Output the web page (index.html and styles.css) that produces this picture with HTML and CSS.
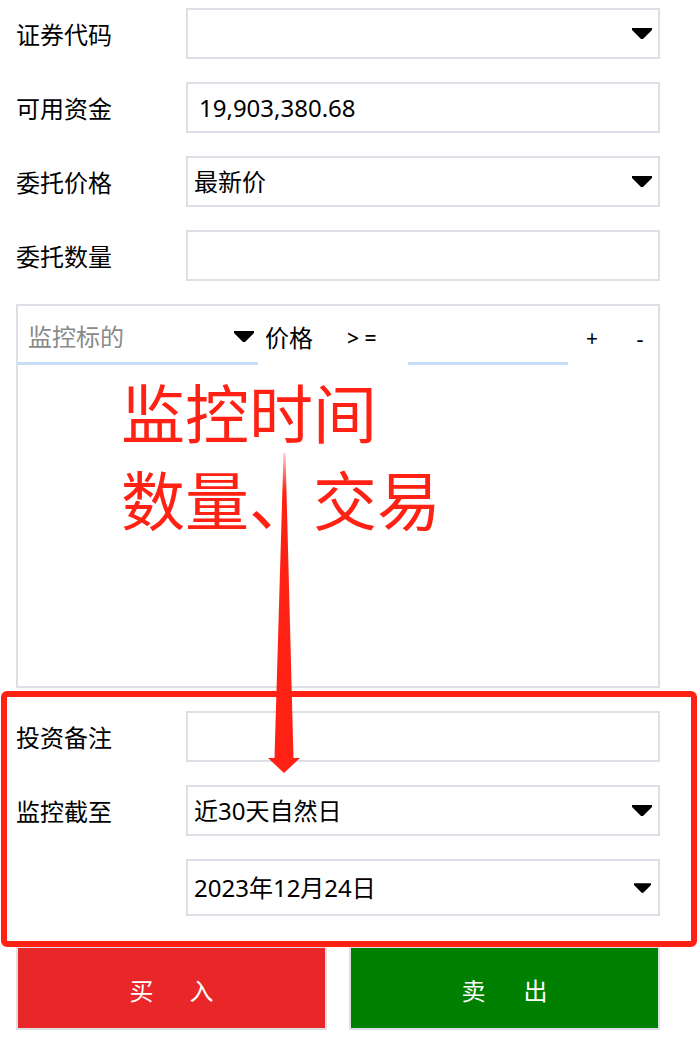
FILE: index.html
```html
<!DOCTYPE html>
<html lang="zh-CN">
<head>
<meta charset="utf-8">
<title>委托</title>
<link rel="stylesheet" href="styles.css">
</head>
<body>
<div class="page">
  <div class="form-row">
    <span class="label">证券代码</span>
    <div class="field select">
      <span class="val"></span>
      <svg class="caret" viewBox="0 0 20 11" width="20" height="11"><polygon points="0,0 20,0 20,2 11,11 9,11 0,2"/></svg>
    </div>
  </div>
  <div class="form-row">
    <span class="label">可用资金</span>
    <div class="field input"><span class="val">19,903,380.68</span></div>
  </div>
  <div class="form-row">
    <span class="label">委托价格</span>
    <div class="field select">
      <span class="val">最新价</span>
      <svg class="caret" viewBox="0 0 20 11" width="20" height="11"><polygon points="0,0 20,0 20,2 11,11 9,11 0,2"/></svg>
    </div>
  </div>
  <div class="form-row">
    <span class="label">委托数量</span>
    <div class="field input"><span class="val"></span></div>
  </div>

  <div class="monitor">
    <div class="cond">
      <div class="combo">
        <span class="placeholder">监控标的</span>
        <svg class="caret" viewBox="0 0 20 11" width="20" height="11"><polygon points="0,0 20,0 20,2 11,11 9,11 0,2"/></svg>
      </div>
      <span class="cond-label">价格</span>
      <span class="op">&gt; =</span>
      <div class="cond-input"></div>
      <span class="mini plus">+</span>
      <span class="mini minus">-</span>
    </div>
  </div>

  <div class="form-row">
    <span class="label">投资备注</span>
    <div class="field input"><span class="val"></span></div>
  </div>
  <div class="form-row">
    <span class="label">监控截至</span>
    <div class="field select">
      <span class="val">近30天自然日</span>
      <svg class="caret" viewBox="0 0 20 11" width="20" height="11"><polygon points="0,0 20,0 20,2 11,11 9,11 0,2"/></svg>
    </div>
  </div>
  <div class="form-row tall">
    <span class="label"></span>
    <div class="field select">
      <span class="val">2023年12月24日</span>
      <svg class="caret small" viewBox="0 0 20 11" width="17" height="10"><polygon points="0,0 20,0 20,2 11,11 9,11 0,2"/></svg>
    </div>
  </div>

  <div class="actions">
    <div class="btn buy"><span>买</span><span>入</span></div>
    <div class="btn sell"><span>卖</span><span>出</span></div>
  </div>
</div>

<div class="note">监控时间<br>数量、交易</div>
<svg class="arrow" viewBox="0 0 50 330" width="50" height="330">
  <defs>
    <linearGradient id="fade" x1="0" y1="0" x2="0" y2="1">
      <stop offset="0" stop-color="#ff2214" stop-opacity="0.25"/>
      <stop offset="0.12" stop-color="#ff2214" stop-opacity="1"/>
      <stop offset="1" stop-color="#ff2214" stop-opacity="1"/>
    </linearGradient>
  </defs>
  <polygon fill="url(#fade)" points="23.5,3 25.5,3 33.5,308 40,308 24,323 8,308 14.5,308"/>
</svg>
<div class="highlight"></div>
</body>
</html>
```
FILE: styles.css
```css
* { box-sizing: border-box; }

html, body {
  margin: 0;
  padding: 0;
  background: #ffffff;
}

body {
  font-family: "Noto Sans", "Noto Sans CJK SC", sans-serif;
  font-size: 24px;
  color: #000;
  position: relative;
  width: 699px;
  height: 1055px;
  overflow: hidden;
}

.page {
  padding: 8px 39px 0 16px;
  width: 699px;
}

.form-row {
  display: grid;
  grid-template-columns: 170px 1fr;
  align-items: center;
  height: 51px;
  margin-bottom: 23px;
}

.form-row.tall {
  height: 57px;
  margin-bottom: 30px;
}

.label {
  font-size: 24px;
  line-height: 30px;
  padding-top: 3px;
  white-space: nowrap;
}

.field {
  height: 100%;
  border: 2px solid #dcdfe6;
  background: #fff;
  display: flex;
  align-items: center;
  justify-content: space-between;
  padding: 0 6px 0 6px;
}

.field.input {
  padding-left: 11px;
}

.field .val {
  font-size: 24px;
  line-height: 30px;
  white-space: nowrap;
}

.caret {
  display: block;
  fill: #000;
  flex: none;
}

.caret.small {
  margin-right: 1px;
}

.monitor {
  height: 384px;
  border: 2px solid #dcdfe6;
  margin-bottom: 23px;
}

.cond {
  display: flex;
  height: 59px;
}

.cond > * {
  height: 100%;
  display: flex;
  align-items: center;
  padding-top: 5px;
  line-height: 30px;
  white-space: nowrap;
}

.combo {
  width: 240px;
  border-bottom: 3px solid #c4dff7;
  padding-left: 10px;
  padding-right: 4px;
  justify-content: space-between;
}

.placeholder {
  color: #8a8a8a;
  font-size: 24px;
}

.cond-label {
  width: 70px;
  padding-left: 7px;
  font-size: 24px;
}

.op {
  width: 80px;
  padding-left: 19px;
  font-size: 21px;
  font-weight: 500;
  white-space: pre;
}

.cond-input {
  width: 160px;
  border-bottom: 3px solid #c4dff7;
}

.mini {
  justify-content: center;
  font-size: 21px;
}

.plus {
  width: 48px;
}

.minus {
  width: 36px;
  margin-left: 6px;
  font-size: 22px;
}

.actions {
  display: grid;
  grid-template-columns: 1fr 1fr;
  gap: 22px;
  height: 84px;
}

.btn {
  border: 2px solid #dcdfe6;
  display: flex;
  align-items: center;
  justify-content: center;
  gap: 36px;
  color: #fff;
  font-size: 24px;
  padding-top: 2px;
}

.btn.buy { background: #e92628; }
.btn.sell { background: #008000; gap: 38px; }

/* annotation overlays */
.note {
  position: absolute;
  left: 121px;
  top: 367px;
  font-family: "Noto Sans CJK SC", sans-serif;
  font-size: 64px;
  line-height: 87px;
  color: #ff2214;
  white-space: nowrap;
}

.arrow {
  position: absolute;
  left: 260px;
  top: 450px;
}

.highlight {
  position: absolute;
  left: 1px;
  top: 691px;
  width: 696px;
  height: 256px;
  border: 6px solid #ff2214;
  border-radius: 6px;
}
```
